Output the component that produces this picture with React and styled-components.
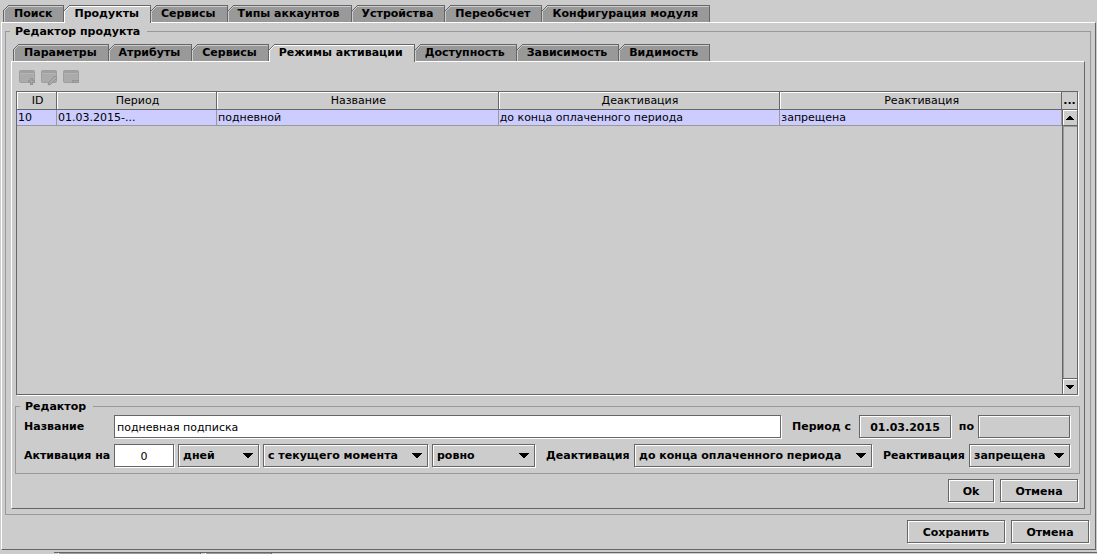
import React, { useId, useState } from 'react';
import styled, { createGlobalStyle, css } from 'styled-components';

const c = {
  face: '#cccccc',
  mid: '#999999',
  dark: '#666666',
  light: '#ffffff',
  selection: '#ccccff',
};

const GlobalStyle = createGlobalStyle`
  *, *::before, *::after { box-sizing: border-box; }
  body {
    margin: 0;
    background: ${c.face};
    color: #000;
    font: 11px/14px "DejaVu Sans", "Noto Sans", sans-serif;
  }
  button, input, select { font: inherit; color: inherit; margin: 0; border-radius: 0; }
`;

const Window = styled.div`
  display: flex;
  flex-direction: column;
  min-height: 100vh;
  padding: 5px 1px 0;
`;

const TabStrip = styled.div`
  display: flex;
  padding-left: 2px;
`;

const TabButton = styled.button`
  position: relative;
  display: flex;
  align-items: flex-start;
  height: ${(p) => (p.$active ? 18 : 17)}px;
  margin-bottom: ${(p) => (p.$active ? -1 : 0)}px;
  padding: 1px 11px 0 10px;
  border: 0;
  border-top: 1px solid ${c.dark};
  border-right: 1px solid ${c.dark};
  border-left: ${(p) => (p.$first ? `1px solid ${c.dark}` : 0)};
  background: ${(p) => (p.$active ? c.face : c.mid)};
  box-shadow: inset 1px 1px 0 ${(p) => (p.$active ? c.light : c.face)};
  font-weight: bold;
  line-height: 14px;
  white-space: nowrap;
`;

const Corner = styled.svg`
  position: absolute;
  top: -1px;
  left: ${(p) => (p.$first ? -1 : 0)}px;
`;

const raised = css`
  border: 1px solid ${c.dark};
  box-shadow: 1px 1px 0 ${c.light}, inset 1px 1px 0 ${c.light};
  background: ${c.face};
`;

const Pane = styled.div`
  display: flex;
  flex-direction: column;
  flex: 1;
  border: 1px solid ${c.dark};
  border-top-color: ${c.light};
  border-left-color: ${c.light};
  padding: ${(p) => (p.$inner ? '8px 4px 6px 3px' : '0 4px 6px 3px')};
`;

const GroupBox = styled.div`
  display: flex;
  flex-direction: column;
  flex: ${(p) => (p.$grow ? 1 : 'none')};
  margin-top: ${(p) => (p.$grow ? 8 : 10)}px;
  border: 1px solid ${c.mid};
`;

const GroupTitle = styled.div`
  align-self: flex-start;
  height: 16px;
  margin: -8px 0 0 4px;
  padding: 0 7px 0 5px;
  background: ${c.face};
  font-weight: bold;
  line-height: 15px;
`;

const GroupBody = styled.div`
  display: flex;
  flex-direction: column;
  flex: 1;
  padding: ${(p) => (p.$grow ? '4px 5px 5px' : '0 9px 5px 8px')};
  gap: ${(p) => (p.$grow ? 0 : 5)}px;
`;

const Toolbar = styled.div`
  display: flex;
  gap: 6px;
  height: 21px;
  padding-left: 4px;
`;

const ToolButton = styled.button`
  width: 16px;
  height: 16px;
  padding: 0;
  border: 0;
  background: none;
  svg { display: block; }
`;

const GridFrame = styled.div`
  display: flex;
  flex: 1;
  margin: 0 2px 1px 1px;
  border: 1px solid ${c.dark};
  box-shadow: 1px 1px 0 ${c.light};
`;

const GridBody = styled.div`
  flex: 1;
  min-width: 0;
`;

const Table = styled.table`
  width: 100%;
  table-layout: fixed;
  border-collapse: separate;
  border-spacing: 0;
`;

const Col = styled.col`
  width: ${(p) => p.$w};
`;

const Th = styled.th`
  height: 18px;
  padding: 1px 0 0 2px;
  border-right: 1px solid ${c.dark};
  border-bottom: 1px solid ${c.dark};
  box-shadow: inset 1px 1px 0 ${c.light};
  font-weight: normal;
  line-height: 16px;
`;

const Td = styled.td`
  height: 16px;
  padding: 0 1px;
  border-right: 1px solid ${c.mid};
  border-bottom: 1px solid ${c.mid};
  background: ${c.selection};
  line-height: 14px;
  white-space: nowrap;
  overflow: hidden;
`;

const ScrollColumn = styled.div`
  display: flex;
  flex-direction: column;
  width: 15px;
`;

const ColumnsButton = styled.button`
  height: 18px;
  padding: 0;
  border: 0;
  border-bottom: 1px solid ${c.dark};
  background: ${c.face};
  font-weight: bold;
  line-height: 18px;
`;

const ScrollBar = styled.div`
  display: flex;
  flex-direction: column;
  flex: 1;
  border-left: 1px solid ${c.dark};
`;

const ScrollButton = styled.button`
  display: flex;
  align-items: center;
  justify-content: center;
  height: 16px;
  padding: 0;
  border: 0;
  border-${(p) => (p.$down ? 'top' : 'bottom')}: 1px solid ${c.dark};
  background: ${c.face};
  box-shadow: inset 1px 1px 0 ${c.light};
`;

const Track = styled.div`
  flex: 1;
  box-shadow: inset 1px 1px 0 ${c.mid};
`;

const Row = styled.div`
  display: flex;
  align-items: center;
  gap: 4px;
  margin-bottom: 1px;
`;

const Label = styled.label`
  flex: none;
  width: ${(p) => p.$w}px;
  margin-left: ${(p) => (p.$spaced ? 7 : 0)}px;
  margin-right: ${(p) => (p.$lead ? -4 : 0)}px;
  padding-top: 1px;
  font-weight: bold;
  white-space: nowrap;
  text-align: ${(p) => (p.$end ? 'right' : 'left')};
`;

const TextInput = styled.input`
  ${(p) => (p.$w ? `flex: none; width: ${p.$w}px;` : 'flex: 1; min-width: 0;')}
  height: 23px;
  padding: 1px 2px 0;
  border: 1px solid ${c.dark};
  box-shadow: 1px 1px 0 ${c.light};
  background: #fff;
  text-align: ${(p) => (p.$center ? 'center' : 'left')};
  outline: none;
`;

const SelectBox = styled.div`
  position: relative;
  display: flex;
  ${(p) => (p.$w ? `flex: none; width: ${p.$w}px;` : 'flex: 1; min-width: 0;')}
  svg {
    position: absolute;
    right: 6px;
    top: 9px;
    pointer-events: none;
  }
`;

const NativeSelect = styled.select`
  ${raised}
  appearance: none;
  width: 100%;
  height: 23px;
  padding: 1px 0 0 4px;
  font-weight: bold;
  outline: none;
`;

const Button = styled.button`
  ${raised}
  flex: none;
  height: 23px;
  width: ${(p) => p.$w}px;
  padding: 2px 0 0;
  font-weight: bold;
  line-height: 14px;
  white-space: nowrap;
`;

const Actions = styled.div`
  display: flex;
  justify-content: flex-end;
  gap: 6px;
  padding: 5px 2px 0 0;
`;

const NextStrip = styled.div`
  display: flex;
  height: 2px;
  margin: 2px -1px 0 53px;
  border-top: 1px solid ${c.dark};
`;

const NextTab = styled.div`
  width: ${(p) => p.$w}px;
  margin-left: 4px;
  border-left: 1px solid ${c.light};
  border-right: 1px solid ${c.dark};
  background: ${c.mid};
`;

function Tab({ label, active, first, onClick }) {
  return (
    <TabButton type="button" role="tab" aria-selected={active} $active={active} $first={first} onClick={onClick}>
      <Corner width="7" height="7" viewBox="0 0 7 7" $first={first} shapeRendering="crispEdges" aria-hidden="true">
        <path fill={c.face} d="M0 0H5V1H4V2H3V3H2V4H1V5H0Z" />
        <path fill={c.dark} d="M5 0h1v1h-1zM4 1h1v1h-1zM3 2h1v1h-1zM2 3h1v1h-1zM1 4h1v1h-1zM0 5h1v1h-1z" />
        <path
          fill={active ? c.light : c.face}
          d="M5 1h1v1h-1zM4 2h1v1h-1zM3 3h1v1h-1zM2 4h1v1h-1zM1 5h1v1h-1z"
        />
      </Corner>
      {label}
    </TabButton>
  );
}

function Tabs({ items, initial }) {
  const [current, setCurrent] = useState(initial);
  return (
    <TabStrip role="tablist">
      {items.map((label, i) => (
        <Tab key={label} label={label} first={i === 0} active={i === current} onClick={() => setCurrent(i)} />
      ))}
    </TabStrip>
  );
}

function Group({ title, grow, children }) {
  const id = useId();
  return (
    <GroupBox role="group" aria-labelledby={id} $grow={grow}>
      <GroupTitle id={id}>{title}</GroupTitle>
      <GroupBody $grow={grow}>{children}</GroupBody>
    </GroupBox>
  );
}

function Select({ id, label, options, width }) {
  return (
    <SelectBox $w={width}>
      <NativeSelect id={id} aria-label={label}>
        {options.map((o) => <option key={o}>{o}</option>)}
      </NativeSelect>
      <svg width="10" height="5" viewBox="0 0 10 5" shapeRendering="crispEdges" aria-hidden="true">
        <path d="M0 0H10V1H9V2H8V3H7V4H6V5H4V4H3V3H2V2H1V1H0Z" />
      </svg>
    </SelectBox>
  );
}

function Arrow({ down }) {
  return (
    <svg width="8" height="4" viewBox="0 0 8 4" shapeRendering="crispEdges" aria-hidden="true">
      <path d={down ? 'M0 0H8V1H7V2H6V3H5V4H3V3H2V2H1V1H0Z' : 'M3 0H5V1H6V2H7V3H8V4H0V3H1V2H2V1H3Z'} />
    </svg>
  );
}

function WindowIcon({ children }) {
  return (
    <svg width="16" height="16" viewBox="0 0 16 16" aria-hidden="true">
      <rect x="0.5" y="0.5" width="15" height="12" rx="1" fill="#ababab" stroke="#9e9e9e" />
      <rect x="1" y="1" width="14" height="2" fill="#a0a0a0" />
      <rect x="1" y="3" width="14" height="1" fill="#b4b4b4" />
      {children}
    </svg>
  );
}

export default function App() {
  return (
    <>
      <GlobalStyle />
      <Window>
        <Tabs
          initial={1}
          items={['Поиск', 'Продукты', 'Сервисы', 'Типы аккаунтов', 'Устройства', 'Переобсчет', 'Конфигурация модуля']}
        />
        <Pane>
          <Group title="Редактор продукта" grow>
            <Tabs
              initial={3}
              items={['Параметры', 'Атрибуты', 'Сервисы', 'Режимы активации', 'Доступность', 'Зависимость', 'Видимость']}
            />
            <Pane $inner>
              <Toolbar>
                <ToolButton type="button" aria-label="Добавить">
                  <WindowIcon>
                    <path d="M11 8h3v2h2v3h-2v2h-3v-2h-2v-3h2z" fill="#949494" />
                    <path d="M12 9h1v2h2v1h-2v2h-1v-2h-2v-1h2z" fill="#a6a6a6" />
                  </WindowIcon>
                </ToolButton>
                <ToolButton type="button" aria-label="Изменить">
                  <WindowIcon>
                    <path d="M7 15l1-3 6-6 2 2-6 6z" fill="#aaaaaa" stroke="#939393" />
                  </WindowIcon>
                </ToolButton>
                <ToolButton type="button" aria-label="Удалить">
                  <WindowIcon>
                    <rect x="9" y="10" width="7" height="3" fill="#949494" />
                    <rect x="10" y="11" width="5" height="1" fill="#a6a6a6" />
                  </WindowIcon>
                </ToolButton>
              </Toolbar>
              <GridFrame>
                <GridBody>
                  <Table>
                    <colgroup>
                      <Col $w="40px" />
                      <Col $w="160px" />
                      <Col $w="auto" />
                      <Col $w="auto" />
                      <Col $w="auto" />
                    </colgroup>
                    <thead>
                      <tr>
                        <Th>ID</Th>
                        <Th>Период</Th>
                        <Th>Название</Th>
                        <Th>Деактивация</Th>
                        <Th>Реактивация</Th>
                      </tr>
                    </thead>
                    <tbody>
                      <tr>
                        <Td>10</Td>
                        <Td>01.03.2015-...</Td>
                        <Td>подневной</Td>
                        <Td>до конца оплаченного периода</Td>
                        <Td>запрещена</Td>
                      </tr>
                    </tbody>
                  </Table>
                </GridBody>
                <ScrollColumn>
                  <ColumnsButton type="button">...</ColumnsButton>
                  <ScrollBar>
                    <ScrollButton type="button" aria-label="Вверх"><Arrow /></ScrollButton>
                    <Track />
                    <ScrollButton type="button" aria-label="Вниз" $down><Arrow down /></ScrollButton>
                  </ScrollBar>
                </ScrollColumn>
              </GridFrame>
              <Group title="Редактор">
                <Row>
                  <Label htmlFor="name" $w={90} $lead>Название</Label>
                  <TextInput id="name" defaultValue="подневная подписка" />
                  <Label htmlFor="from" $w={63} $spaced>Период с</Label>
                  <Button id="from" type="button" $w={92}>01.03.2015</Button>
                  <Label htmlFor="to" $w={19} $end>по</Label>
                  <Button id="to" type="button" $w={92} />
                </Row>
                <Row>
                  <Label htmlFor="count" $w={90} $lead>Активация на</Label>
                  <TextInput id="count" $w={60} $center defaultValue="0" />
                  <Select label="Единица" width={81} options={['дней']} />
                  <Select label="Начало" width={165} options={['с текущего момента']} />
                  <Select label="Точность" width={103} options={['ровно']} />
                  <Label htmlFor="deact" $w={84} $spaced>Деактивация</Label>
                  <Select id="deact" options={['до конца оплаченного периода']} />
                  <Label htmlFor="react" $w={82} $spaced>Реактивация</Label>
                  <Select id="react" width={101} options={['запрещена']} />
                </Row>
              </Group>
              <Actions>
                <Button type="button" $w={46}>Ok</Button>
                <Button type="button" $w={78}>Отмена</Button>
              </Actions>
            </Pane>
          </Group>
          <Actions>
            <Button type="button" $w={98}>Сохранить</Button>
            <Button type="button" $w={78}>Отмена</Button>
          </Actions>
        </Pane>
        <NextStrip>
          <NextTab $w={143} />
          <NextTab $w={67} />
        </NextStrip>
      </Window>
    </>
  );
}
